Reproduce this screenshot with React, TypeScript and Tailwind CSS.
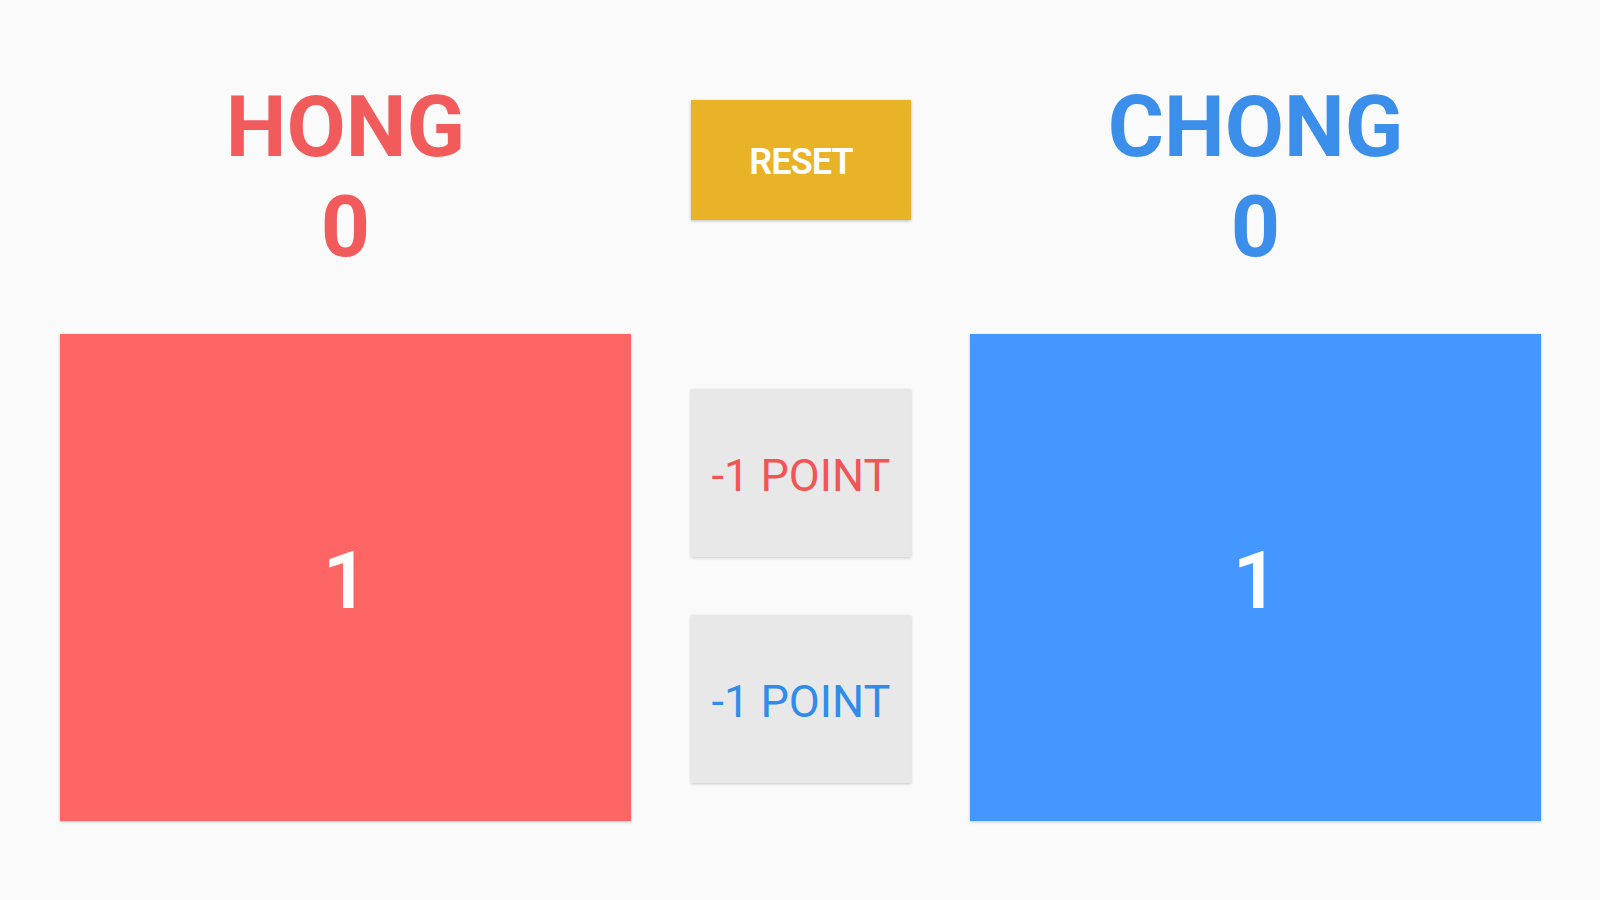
import React from "react";

function Side({ name, score, points, nameClass, boxClass }: { name: string; score: number; points: number; nameClass: string; boxClass: string }) {
  return (
    <div className="w-[571px] shrink-0 flex flex-col items-center">
      <div className={`text-[86px] leading-[100px] font-bold text-center ${nameClass}`}>
        <div>{name}</div>
        <div>{score}</div>
      </div>
      <button
        className={`mt-[57px] w-[571px] h-[487px] flex items-center justify-center pt-[6px] text-white text-[80px] font-semibold shadow-[0_1px_3px_rgba(0,0,0,0.2)] ${boxClass}`}
      >
        {points}
      </button>
    </div>
  );
}

export default function App() {
  return (
    <div className="w-[1600px] h-[900px] bg-[#fafafa] font-['Roboto',sans-serif] overflow-hidden">
      <div className="flex px-[60px] pt-[77px]">
        <Side name="HONG" score={0} points={1} nameClass="text-[#f25b5b]" boxClass="bg-[#fe6565]" />
        <div className="w-[220px] shrink-0 ml-[60px] mr-[59px] flex flex-col">
          <button className="mt-[23px] h-[120px] pt-[4px] bg-[#e9b328] text-white text-[36px] font-semibold tracking-tight shadow-[0_1px_3px_rgba(0,0,0,0.25)]">
            RESET
          </button>
          <button className="mt-[169px] h-[168px] pt-[6px] bg-[#e8e8e8] text-[#f25555] text-[45px] shadow-[0_1px_3px_rgba(0,0,0,0.2)]">
            -1 POINT
          </button>
          <button className="mt-[58px] h-[168px] pt-[6px] bg-[#e8e8e8] text-[#2f8cec] text-[45px] shadow-[0_1px_3px_rgba(0,0,0,0.2)]">
            -1 POINT
          </button>
        </div>
        <Side name="CHONG" score={0} points={1} nameClass="text-[#3b8eea]" boxClass="bg-[#4397fe]" />
      </div>
    </div>
  );
}
